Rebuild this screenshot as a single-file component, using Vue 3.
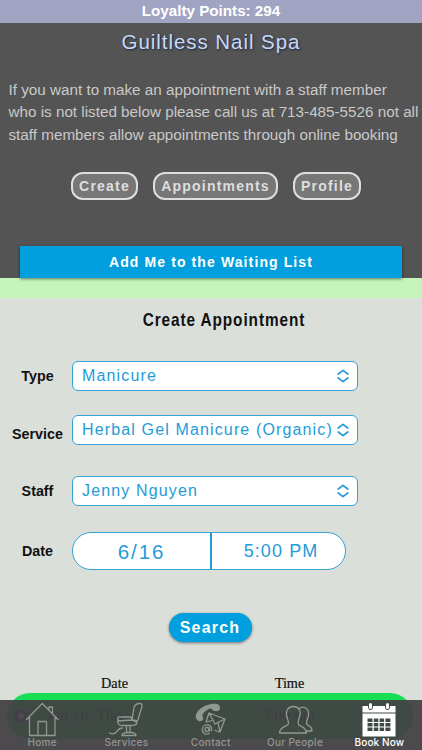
<script setup>
const actions = ['Create', 'Appointments', 'Profile']
const fields = [
  { label: 'Type', value: 'Manicure', cls: 'type' },
  { label: 'Service', value: 'Herbal Gel Manicure (Organic)', cls: 'service' },
  { label: 'Staff', value: 'Jenny Nguyen', cls: 'staff' },
]
</script>

<template>
  <main class="screen">
    <div class="loyalty">Loyalty Points: 294</div>
    <header class="intro">
      <h1>Guiltless Nail Spa</h1>
      <p>
        <span>If you want to make an appointment with a staff member</span>
        <span>who is not listed below please call us at 713-485-5526 not all</span>
        <span>staff members allow appointments through online booking</span>
      </p>
      <div class="actions">
        <button v-for="a in actions" :key="a" :class="a.toLowerCase()">{{ a }}</button>
      </div>
      <button class="waiting">Add Me to the Waiting List</button>
    </header>
    <div class="strip"></div>
    <section class="form">
      <h2><span>Create Appointment</span></h2>
      <div v-for="f in fields" :key="f.label" class="row" :class="f.cls">
        <label>{{ f.label }}</label>
        <div class="select">
          <span>{{ f.value }}</span>
          <svg width="12" height="14" viewBox="0 0 12 14"><path d="M1.2 5 6 1.400 10.800 5M1.200 9 6 12.600 10.800 9" /></svg>
        </div>
      </div>
      <div class="row date">
        <label>Date</label>
        <div class="when">
          <span class="day">6/16</span>
          <span class="hour">5:00 PM</span>
        </div>
      </div>
      <button class="search">Search</button>
      <div class="heads"><span>Date</span><span>Time</span></div>
      <div class="slot">
        <i></i><span class="slot-day">Jun 16, Thu</span><span class="slot-time">5:00 pm</span>
      </div>
    </section>

    <nav class="tabs">
      <div class="tab">
        <svg viewBox="0 0 36 36"><path d="M2.500 18.500 18.300 2.500 34 18.500M5.500 16v18.500H31V16M14 34.500V20.500h8.500v14M25 9V6h3.500v6.500" /></svg>
        <span>Home</span>
      </div>
      <div class="tab">
        <svg viewBox="0 0 36 36"><path d="M31 2.500q3.500-.5 3 3l-4 13q-1 2.500-3 2l-3-1.500 2-12.500q1-3.500 5-4ZM11 20q-2-2-1-3.500 1-.9 3-.5h9q2 .3 2 3M9.500 20l14-1q5 0 5.500 1.500 0 4-5 4H14q-4 0-4.500-4.500ZM18.500 25v6.500M22 25v6.500M14 34.500q0-2.500 5-3h4q5 .5 5 3ZM1.500 32q4 2 7-1 2.500-4 6-4" /></svg>
        <span>Services</span>
      </div>
      <div class="tab">
        <svg viewBox="0 0 36 36">
          <path class="solid" d="M5.500 20C2 18 1.500 13 6 9c5-5 13-7 18-6 3 .7 4 5 2 6.500-2 1.500-6 .5-7-1-1-1.400-2-1-4 0-4 2-6 5-5.500 7 2 2 0 5.500-4 4.500Z" />
          <path d="m16 12 16 6-5 13-5-1.500M16 12l-3 9M16 12l6 11 10-5M14 21l6-2M25 21.500 27 31" />
          <circle class="badge" cx="14" cy="28.500" r="6" />
          <circle cx="14" cy="28.500" r="2" />
          <path d="M16.200 26.500v2.500q1.800 1.500 2.500-.5c0-6.200-9.400-5.900-9.400 0 0 4.500 4.500 5.700 7 3.700" />
        </svg>
        <span>Contact</span>
      </div>
      <div class="tab">
        <svg viewBox="0 0 36 36">
          <path d="M22.500 7.500c4-3 9.500-.5 9 6 0 4-2 5-2 8 0 2 .5 2.700 3 3.500q2.500 1.500 2.500 5h-6" />
          <path d="M16.500 5.500c5.500 0 7.500 4.500 6.500 9-1.500 4-2 5-2 8 0 3.500 7.500 1.500 8.500 9.500h-27c1-8 9-6 9-9.500 0-3-1-4-2-8-1-4.500 1.500-9 7-9Z" />
        </svg>
        <span>Our People</span>
      </div>
      <div class="tab active">
        <svg viewBox="0 0 36 36">
          <path class="solid" fill-rule="evenodd" d="M1.500 5H7q0 4 2.500 4T12 5h12q0 4 2.500 4T29 5h5.500v6.500h-33ZM1.500 12.500h33v23h-33ZM6.500 17.500v3.500h5v-3.500Zm6.300 0v3.500h4.500v-3.500Zm5.800 0v3.500h4.500v-3.500Zm5.800 0v3.500h5v-3.500ZM6.500 22v3.500h5V22Zm6.300 0v3.500h4.500V22Zm5.800 0v3.500h4.500V22Zm5.800 0v3.500h5V22ZM6.500 26.500v3.500h5v-3.500Zm6.300 0v3.500h4.500v-3.500Zm5.800 0v3.500h4.500v-3.500Zm5.800 0v3.500h5v-3.500Z" />
          <rect class="solid" x="8" y="2" width="3" height="6" rx="1.500" />
          <rect class="solid" x="25" y="2" width="3" height="6" rx="1.500" />
        </svg>
        <span>Book Now</span>
      </div>
    </nav>
  </main>
</template>

<style>
body { margin: 0; background: #dadedb; }
</style>

<style scoped>
.screen {
  position: relative;
  box-sizing: border-box;
  width: 422px;
  height: 750px;
  overflow: hidden;
  background: #dadfda;
  font-family: "Liberation Sans", Arial, sans-serif;
}
button { border: 0; padding: 0; margin: 0; font-family: inherit; font-weight: 700; }
.loyalty {
  height: 23px;
  line-height: 22px;
  background: #a0a4c2;
  color: #fff;
  text-align: center;
  font-size: 15.200px;
  font-weight: 700;
}
.intro {
  height: 255px;
  background: #545454;
  display: flex;
  flex-direction: column;
  align-items: center;
}
h1 {
  margin: 5px 0 0;
  height: 27px;
  line-height: 27px;
  font-size: 20.500px;
  font-weight: 400;
  letter-spacing: .950px;
  color: #c8d8f8;
  text-shadow: 1px 1px 2px #1c2740;
}
p {
  align-self: stretch;
  margin: 24px 0 0 8.500px;
  font-size: 15.240px;
  line-height: 22.400px;
  color: #c9c9c9;
  white-space: nowrap;
}
p span { display: block; }
.actions { display: flex; gap: 15px; margin-top: 26px; padding-left: 10px; }
.actions button {
  box-sizing: border-box;
  height: 28px;
  border: 2px solid #dedede;
  border-radius: 12px;
  background: #777;
  color: #dedede;
  font-size: 14px;
  letter-spacing: 1.200px;
}
.create { width: 67px; }
.appointments { width: 125px; }
.profile { width: 68px; }
.waiting {
  width: 382px;
  height: 32px;
  margin-top: 46px;
  background: #019fdd;
  color: #fff;
  font-size: 14px;
  letter-spacing: 1.110px;
  box-shadow: 0 1px 3px rgba(0, 0, 0, .5);
  position: relative;
  flex: none;
}
.strip { height: 20px; background: #c5f5ba; }
.form { display: flex; flex-direction: column; }
h2 { margin: 11px 0 0 26px; height: 22px; line-height: 22px; text-align: center; font-size: 18.500px; color: #111; }
h2 span { display: inline-block; transform: scaleX(.83); letter-spacing: 1.100px; white-space: nowrap; }
.row { display: grid; grid-template-columns: 72px 286px; align-items: center; height: 30px; }
.type { margin-top: 30px; }
.service { margin-top: 24px; }
.staff { margin-top: 31px; }
.date { margin-top: 26px; height: 38px; }
label { text-align: center; font-size: 14.300px; font-weight: 700; color: #111; padding-left: 3px; white-space: nowrap; }
.service label { padding-top: 7px; }
.select {
  box-sizing: border-box;
  height: 30px;
  border: 1px solid #36a3d4;
  border-radius: 6px;
  background: #fff;
  color: #249bd8;
  display: flex;
  align-items: center;
  justify-content: space-between;
  padding: 0 8px 1px 9px;
  font-size: 16px;
  letter-spacing: 1.140px;
  white-space: nowrap;
}
svg { fill: none; stroke: currentColor; stroke-linecap: round; stroke-linejoin: round; }
.select svg { stroke-width: 1.700; flex: none; }
.when {
  box-sizing: border-box;
  width: 274px;
  height: 38px;
  border: 1px solid #36a3d4;
  border-radius: 19px;
  background: #fff;
  color: #249bd8;
  display: flex;
  line-height: 37px;
}
.day { width: 137px; border-right: 2px solid #249bd8; text-align: center; font-size: 20.500px; letter-spacing: 1.900px; }
.hour { flex: 1; padding-left: 5px; text-align: center; font-size: 18px; letter-spacing: 1.100px; }
.search {
  align-self: center;
  width: 83px;
  height: 29px;
  margin: 43px 2px 0 0;
  border-radius: 15px;
  background: #019fdd;
  color: #fff;
  font-size: 16px;
  letter-spacing: 1.200px;
  box-shadow: 0 1px 3px rgba(0, 0, 0, .5);
}
.heads { display: grid; grid-template-columns: 175px 175px; padding-left: 27px; margin-top: 33px; height: 17px; font: 14.300px/17px "Liberation Serif", serif; text-align: center; color: #111; -webkit-text-stroke: .200px #111; }
.slot { display: flex; align-items: center; height: 46px; margin: 1px 9px 0 7px; border-radius: 23px; background: #18de54; font: 16px "Liberation Serif", serif; color: #111; }
.slot i { width: 6px; height: 6px; border: 4px solid #3148bd; border-radius: 50%; background: #fff; margin-left: 7px; }
.slot-day { margin-left: 18px; width: 216px; }
.tabs {
  position: absolute;
  left: 0;
  right: 0;
  bottom: 0;
  height: 50px;
  display: grid;
  grid-template-columns: repeat(5, 84.300px);
  background: rgba(67, 65, 67, .94);
}
.tab { display: flex; flex-direction: column; align-items: center; color: #929792; font: 500 10px/12px Inter, sans-serif; letter-spacing: .300px; }
.tab svg { width: 36px; height: 36px; stroke-width: 1.300; flex: none; margin: .500px 0 -.500px; }
.tab .solid { fill: currentColor; stroke: none; }
.badge { fill: #424b43; stroke: none; }
.active { color: #fff; }
.active span { letter-spacing: .100px; }
</style>
